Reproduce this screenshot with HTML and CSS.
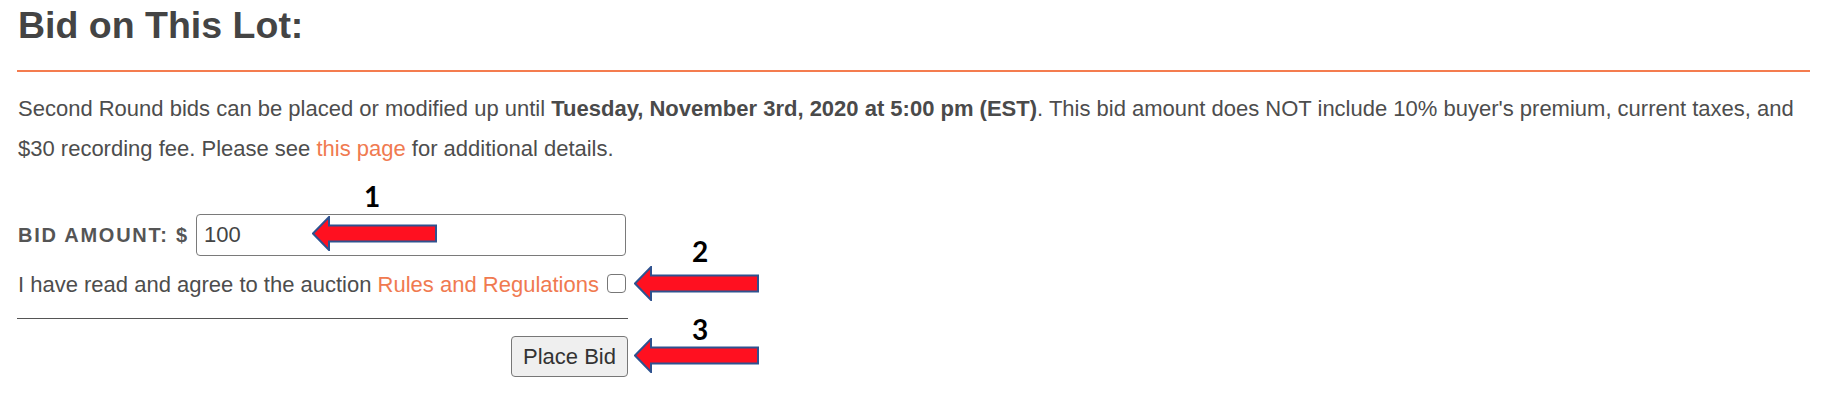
FILE: index.html
```html
<!DOCTYPE html>
<html lang="en">
<head>
  <meta charset="UTF-8">
  <meta name="viewport" content="width=device-width, initial-scale=1.0">
  <title>Bid on This Lot</title>
  <link rel="stylesheet" href="styles.css">
</head>
<body>
<div class="page">
  <h2 class="bid-title">Bid on This Lot:</h2>

  <p class="bid-note">Second Round bids can be placed or modified up until <strong>Tuesday, November 3rd, 2020 at 5:00 pm (EST)</strong>. This bid amount does NOT include 10% buyer's premium, current taxes, and $30 recording fee. Please see <a href="#">this page</a> for additional details.</p>

  <form class="bid-form" onsubmit="return false;">
    <div class="amount-row">
      <label for="bidAmount" class="amount-label">Bid Amount: $</label>
      <input type="text" id="bidAmount" class="amount-input" value="100">
    </div>
    <div class="agree-row">
      <label for="agree">I have read and agree to the auction <a href="#">Rules and Regulations</a></label>
      <input type="checkbox" id="agree" class="agree-box">
    </div>
    <hr class="form-rule">
    <div class="submit-row">
      <button type="submit" class="place-bid">Place Bid</button>
    </div>
  </form>

  <!-- annotations drawn over the form -->
  <span class="step step-1">1</span>
  <span class="step step-2">2</span>
  <span class="step step-3">3</span>
  <svg class="arrow arrow-1" width="126" height="35" viewBox="0 0 126 35"><polygon points="1,17.5 17,1 17,9.5 124,9.5 124,25.5 17,25.5 17,34" /></svg>
  <svg class="arrow arrow-2" width="126" height="35" viewBox="0 0 126 35"><polygon points="1,17.5 17,1 17,9.5 124,9.5 124,25.5 17,25.5 17,34" /></svg>
  <svg class="arrow arrow-3" width="126" height="35" viewBox="0 0 126 35"><polygon points="1,17.5 17,1 17,9.5 124,9.5 124,25.5 17,25.5 17,34" /></svg>
</div>
</body>
</html>
```

FILE: styles.css
```css
body { margin: 0; font-family: "Liberation Sans", Arial, Helvetica, sans-serif; color: #4d4d4d; background: #fff; }
a { color: #f07a50; text-decoration: none; }

.page { position: relative; padding: 4px 20px 0 17px; }

.bid-title {
    margin: 0;
    padding: 0 0 24px 1px;
    font-size: 37.5px;
    line-height: 42px;
    color: #444;
    border-bottom: 2px solid #f47c4f;
}

.bid-note {
    margin: 17px 0 0 1px;
    font-size: 22px;
    line-height: 40px;
}
.bid-note strong { color: #4a4a4a; }

.bid-form { width: 611px; }

.amount-row { display: flex; align-items: center; height: 44px; margin-top: 44px; }
.amount-label {
    font-size: 20px;
    font-weight: bold;
    text-transform: uppercase;
    letter-spacing: 1.75px;
    color: #555;
    padding-left: 1px;
    margin-right: 7px;
}
.amount-input {
    flex: 1;
    height: 42px;
    box-sizing: border-box;
    margin: 0 2px 0 0;
    padding: 0 7px;
    font-family: inherit;
    font-size: 22px;
    color: #444;
    border: 1px solid #7a7a7a;
    border-radius: 4px;
}

.agree-row { display: flex; align-items: center; height: 25px; margin-top: 15px; font-size: 22px; padding-left: 1px; }
.agree-box {
    appearance: none;
    width: 19px;
    height: 19px;
    margin: 0 0 3px 8px;
    border: 1px solid #777;
    border-radius: 4px;
    background: #fff;
}

.form-rule { margin: 21px 0 0; border: none; border-top: 1px solid #555; }

.submit-row { display: flex; justify-content: flex-end; margin-top: 17px; }
.place-bid {
    width: 117px;
    height: 41px;
    padding: 0;
    font-family: inherit;
    font-size: 22px;
    color: #333;
    background: #efefef;
    border: 1px solid #777;
    border-radius: 4px;
}

.step {
    position: absolute;
    font-family: Lato, "Open Sans", sans-serif;
    font-weight: bold;
    font-size: 28px;
    line-height: 1;
    color: #000;
}
.step-1 { left: 364px; top: 182px; }
.step-2 { left: 692px; top: 237px; }
.step-3 { left: 692px; top: 315px; }

.arrow { position: absolute; }
.arrow polygon { fill: #ff1020; stroke: #2f528f; stroke-width: 2; }
.arrow-1 { left: 312px; top: 216px; }
.arrow-2 { left: 634px; top: 266px; }
.arrow-3 { left: 634px; top: 338px; }
```
